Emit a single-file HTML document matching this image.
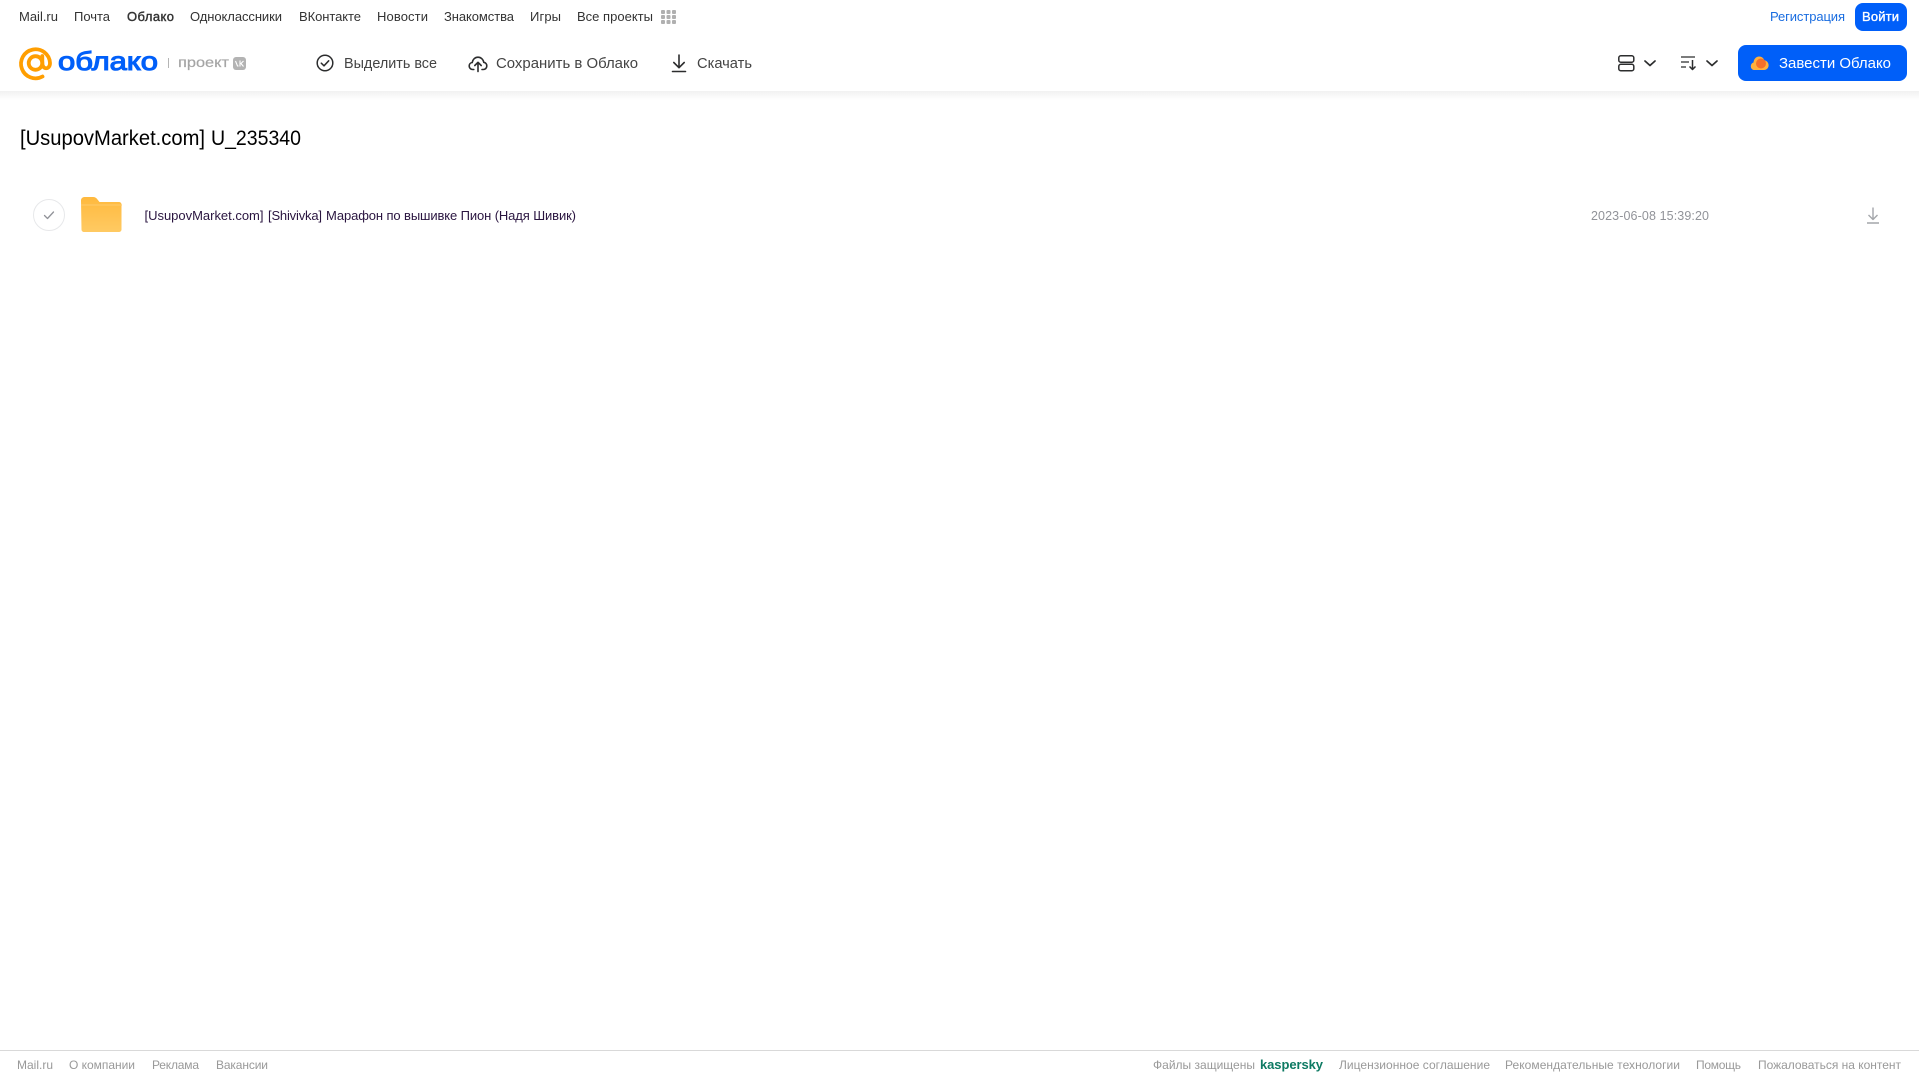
<!DOCTYPE html>
<html lang="ru">
<head>
<meta charset="utf-8">
<title>Облако</title>
<style>
html,body{margin:0;padding:0;width:1919px;height:1079px;overflow:hidden;background:#fff}
svg{display:block;position:absolute;left:0;top:0}
text{font-family:"Liberation Sans",sans-serif;white-space:pre}
.n{font-size:13px;fill:#333}
.a{font-size:14.5px;fill:#444}
.f{font-size:12px;fill:#999}
</style>
</head>
<body>
<svg width="1919" height="1079" viewBox="0 0 1919 1079" xmlns="http://www.w3.org/2000/svg">
<defs>
<linearGradient id="sh" x1="0" y1="0" x2="0" y2="1"><stop offset="0" stop-color="#f1f1f1"/><stop offset="1" stop-color="#fff"/></linearGradient>
<linearGradient id="fd" x1="0" y1="0" x2="0" y2="1"><stop offset="0" stop-color="#ffb93d"/><stop offset="1" stop-color="#ffca63"/></linearGradient>
</defs>
<rect x="0" y="91" width="1919" height="9" fill="url(#sh)"/>

<!-- top nav -->
<text class="n" x="19" y="21" textLength="39" lengthAdjust="spacing">Mail.ru</text>
<text class="n" x="74" y="21" textLength="36" lengthAdjust="spacing">Почта</text>
<text class="n" x="127" y="21" textLength="47" lengthAdjust="spacing" stroke="#333" stroke-width=".4">Облако</text>
<text class="n" x="190" y="21" textLength="92" lengthAdjust="spacing">Одноклассники</text>
<text class="n" x="299" y="21" textLength="62" lengthAdjust="spacing">ВКонтакте</text>
<text class="n" x="377" y="21" textLength="51" lengthAdjust="spacing">Новости</text>
<text class="n" x="444" y="21" textLength="70" lengthAdjust="spacing">Знакомства</text>
<text class="n" x="530" y="21" textLength="31" lengthAdjust="spacing">Игры</text>
<text class="n" x="577" y="21" textLength="76" lengthAdjust="spacing">Все проекты</text>
<g fill="#b0b0b0">
<rect x="661" y="10" width="4" height="4" rx="1"/><rect x="666.500" y="10" width="4" height="4" rx="1"/><rect x="672" y="10" width="4" height="4" rx="1"/>
<rect x="661" y="15" width="4" height="4" rx="1"/><rect x="666.500" y="15" width="4" height="4" rx="1"/><rect x="672" y="15" width="4" height="4" rx="1"/>
<rect x="661" y="20" width="4" height="4" rx="1"/><rect x="666.500" y="20" width="4" height="4" rx="1"/><rect x="672" y="20" width="4" height="4" rx="1"/>
</g>

<!-- logo -->
<g fill="none" stroke="#ff9e00" stroke-width="3.800" stroke-linecap="round">
<circle cx="35.500" cy="63" r="6.800"/>
<path d="M42.500 76.500A14.500 14.500 0 1 1 50 63c0 7-7.700 7-7.700 0v-7"/>
</g>
<text x="58" y="70" font-size="26" fill="#005ff9" stroke="#005ff9" stroke-width="1.100" textLength="100" lengthAdjust="spacingAndGlyphs">облако</text>
<rect x="168" y="58" width="1" height="10" fill="#b5b5b5"/>
<text x="178" y="67" font-size="14" fill="#a5a5a5" stroke="#a5a5a5" stroke-width=".2" textLength="51" lengthAdjust="spacingAndGlyphs">проект</text>
<rect x="233" y="57" width="13" height="13" rx="3" fill="#b3b3b3"/>
<path d="M235.500 61l2 5h1M243.500 61l-2.500 2.500 2.500 3M240 60.500v6" fill="none" stroke="#fff" stroke-width="1.100"/>

<!-- actions -->
<circle cx="325" cy="63" r="7.800" fill="none" stroke="#2c2d2e" stroke-width="1.500"/>
<path d="M321.300 63.200l2.700 2.600 4.700-5" fill="none" stroke="#2c2d2e" stroke-width="1.500" stroke-linecap="round" stroke-linejoin="round"/>
<text class="a" x="344" y="68" textLength="93" lengthAdjust="spacingAndGlyphs">Выделить все</text>

<path d="M473.800 69.500h-1.100c-2.100 0-3.500-1.600-3.500-3.500 0-1.900 1.300-3.300 3-3.500.5-3.100 2.800-5.300 5.800-5.300 3 0 5.300 2.200 5.800 5.100 1.800.3 3 1.800 3 3.700 0 2-1.500 3.500-3.500 3.500h-1.300" fill="none" stroke="#2c2d2e" stroke-width="1.600" stroke-linecap="round"/>
<path d="M478 71.500v-9M474.800 65.500l3.200-3.200 3.200 3.200" fill="none" stroke="#2c2d2e" stroke-width="1.600" stroke-linecap="round" stroke-linejoin="round"/>
<text class="a" x="496" y="68" textLength="142" lengthAdjust="spacingAndGlyphs">Сохранить в Облако</text>

<path d="M679 55v12.500M673.800 62.500l5.200 5.200 5.200-5.200M672.500 71.500h13" fill="none" stroke="#2c2d2e" stroke-width="1.600" stroke-linecap="round" stroke-linejoin="round"/>
<text class="a" x="697" y="68" textLength="55" lengthAdjust="spacingAndGlyphs">Скачать</text>

<!-- right top -->
<text x="1770" y="21" font-size="13" fill="#1a6de0" textLength="75" lengthAdjust="spacing">Регистрация</text>
<rect x="1855" y="3" width="52" height="28" rx="8" fill="#005ff9"/>
<text x="1862" y="21" font-size="13" fill="#fff" stroke="#fff" stroke-width=".35" textLength="37" lengthAdjust="spacing">Войти</text>

<rect x="1618.800" y="55.800" width="15" height="6.400" rx="2" fill="none" stroke="#2c2d2e" stroke-width="1.500"/>
<rect x="1618.800" y="64.300" width="15" height="6.400" rx="2" fill="none" stroke="#2c2d2e" stroke-width="1.500"/>
<path d="M1645 61l5 4.500 5-4.500" fill="none" stroke="#2c2d2e" stroke-width="1.700" stroke-linecap="round" stroke-linejoin="round"/>

<path d="M1681 57h14M1681 62h8M1681 67h5" stroke="#2c2d2e" stroke-width="1.200" fill="none"/>
<path d="M1692.500 60v9.500M1689.500 66.500l3 3 3-3" stroke="#2c2d2e" stroke-width="1.500" fill="none" stroke-linejoin="round"/>
<path d="M1707 61l5 4.500 5-4.500" fill="none" stroke="#2c2d2e" stroke-width="1.700" stroke-linecap="round" stroke-linejoin="round"/>

<rect x="1738" y="45" width="169" height="36" rx="8" fill="#005ff9"/>
<path d="M1754.500 70c-2.300 0-3.700-1.800-3.700-3.800 0-1.800 1-3.200 2.700-3.700.3-3.300 2.500-6 5.600-6 2.500 0 4.500 1.500 5.200 3.800 2.700.4 4.300 2.700 4.300 5 0 2.600-1.900 4.700-4.500 4.700z" fill="#ffb13d"/>
<circle cx="1761" cy="63.500" r="5" fill="#f4702b"/>
<text x="1779" y="68" font-size="14.500" fill="#fff" textLength="112" lengthAdjust="spacingAndGlyphs">Завести Облако</text>

<!-- title -->
<text x="20" y="145" font-size="21" fill="#000" textLength="185" lengthAdjust="spacingAndGlyphs">[UsupovMarket.com]</text>
<text x="211" y="145" font-size="21" fill="#000" textLength="90" lengthAdjust="spacingAndGlyphs">U_235340</text>

<!-- row -->
<circle cx="49" cy="215" r="15.500" fill="#fff" stroke="#e7e8ea" stroke-width="1"/>
<path d="M44.500 215.500l3 3 6-6.500" fill="none" stroke="#919399" stroke-width="1.300" stroke-linecap="round" stroke-linejoin="round"/>
<path d="M81 200.500c0-1.900 1.500-3.500 3.500-3.500h8.500c2 0 3.300.8 4.500 2.500l2 2.500h19.500c1.400 0 2.500 1.100 2.500 2.500v25c0 1.400-1.100 2.500-2.500 2.500h-35c-1.400 0-2.500-1.100-2.500-2.500z" fill="url(#fd)"/>
<path d="M81 205h41" stroke="#ffcd72" stroke-width="1.200" opacity=".7"/>
<text x="144.500" y="220" font-size="13" fill="#2a1540" textLength="119" lengthAdjust="spacing">[UsupovMarket.com]</text>
<text x="268" y="220" font-size="13" fill="#2a1540" textLength="54" lengthAdjust="spacing">[Shivivka]</text>
<text x="326" y="220" font-size="13" fill="#2a1540" textLength="250" lengthAdjust="spacing">Марафон по вышивке Пион (Надя Шивик)</text>
<text x="1591" y="220" font-size="12.500" fill="#919399" textLength="118" lengthAdjust="spacing">2023-06-08 15:39:20</text>
<path d="M1873 207.500v12M1868.500 215l4.500 4.500 4.500-4.500M1867 223h12" fill="none" stroke="#a4a6aa" stroke-width="1.400" stroke-linejoin="round"/>

<!-- footer -->
<rect x="0" y="1050" width="1919" height="1" fill="#d9d9d9"/>
<text class="f" x="17" y="1069" textLength="36" lengthAdjust="spacing">Mail.ru</text>
<text class="f" x="69" y="1069" textLength="66" lengthAdjust="spacing">О компании</text>
<text class="f" x="152" y="1069" textLength="47" lengthAdjust="spacing">Реклама</text>
<text class="f" x="216" y="1069" textLength="52" lengthAdjust="spacing">Вакансии</text>
<text class="f" x="1153" y="1069" textLength="102" lengthAdjust="spacing">Файлы защищены</text>
<text x="1260" y="1069" font-size="13" font-weight="700" fill="#0e7a63" textLength="63" lengthAdjust="spacing">kaspersky</text>
<text class="f" x="1339" y="1069" textLength="151" lengthAdjust="spacing">Лицензионное соглашение</text>
<text class="f" x="1505" y="1069" textLength="175" lengthAdjust="spacing">Рекомендательные технологии</text>
<text class="f" x="1696" y="1069" textLength="45" lengthAdjust="spacing">Помощь</text>
<text class="f" x="1758" y="1069" textLength="143" lengthAdjust="spacing">Пожаловаться на контент</text>
</svg>
</body>
</html>
